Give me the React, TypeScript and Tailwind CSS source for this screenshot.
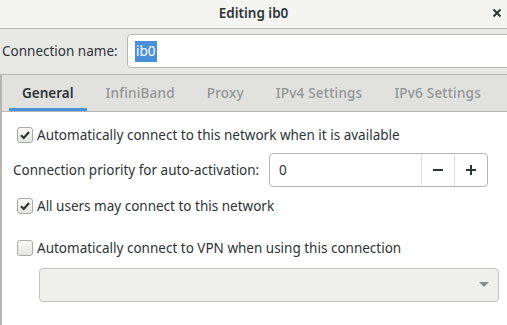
import React from 'react';

const font = { fontFamily: '"Noto Sans", "Open Sans", sans-serif' };

const Check: React.FC<{ on?: boolean }> = ({ on }) => (
  <span className="w-[16px] h-[16px] shrink-0 rounded-[3px] border border-[#a8aaa8] bg-gradient-to-b from-[#f8f8f7] to-[#e4e4e2] flex items-center justify-center">
    {on && (
      <svg width="12" height="12" viewBox="0 0 12 12">
        <path d="M2 6.2 L4.8 9 L10 3" fill="none" stroke="#2e3436" strokeWidth="2.2" />
      </svg>
    )}
  </span>
);

export default function App() {
  const tabs = ['General', 'InfiniBand', 'Proxy', 'IPv4 Settings', 'IPv6 Settings'];

  return (
    <div className="w-[507px] h-[325px] overflow-hidden bg-[#e8e8e7] text-[#2e3436] flex flex-col whitespace-nowrap" style={font}>
      {/* Header */}
      <div className="h-[29px] shrink-0 bg-[#f4f4f3] border-b border-[#b6b6b3] relative flex items-center justify-center">
        <span className="text-[13.5px] font-semibold leading-none">Editing ib0</span>
        <svg className="absolute right-[4px] top-[7px]" width="12" height="12" viewBox="0 0 12 12">
          <path d="M2.5 2.5 L9.5 9.5 M9.5 2.5 L2.5 9.5" stroke="#2e3436" strokeWidth="2" />
        </svg>
      </div>

      {/* Connection name */}
      <div className="flex items-center pt-[5px] shrink-0">
        <span className="pl-[2px] w-[127px] shrink-0 text-[13.5px]">Connection name:</span>
        <div className="w-[420px] h-[34px] shrink-0 bg-white border border-[#b6b6b3] rounded-l-[4px] flex items-center pl-[7px]">
          <span className="bg-[#4a90d9] text-white text-[13.5px] leading-[21px] px-[1px]">ib0</span>
        </div>
      </div>

      {/* Notebook */}
      <div className="mt-[6px] flex-1 flex flex-col border-t border-l-2 border-[#b6b6b3] bg-white">
        <div className="h-[37px] shrink-0 bg-[#e1e1e0] border-b border-[#b6b6b3] flex items-stretch pl-[7px]">
          {tabs.map((t, i) => (
            <div
              key={t}
              className={`px-[13px] mr-[6px] flex items-center text-[13.5px] ${i === 0 ? 'font-semibold text-[#2e3436] border-b-[3px] border-[#4a90d9] pt-[3px]' : 'font-medium text-[#929595] tracking-[0.2px]'}`}
            >
              {t}
            </div>
          ))}
        </div>

        <div className="flex flex-col text-[13.5px]">
          <label className="flex items-center gap-[4px] pl-[15px] mt-[13px] h-[20px]">
            <Check on />
            <span>Automatically connect to this network when it is available</span>
          </label>

          <div className="flex items-center pl-[11px] mt-[8px]">
            <span className="w-[256px] shrink-0">Connection priority for auto-activation:</span>
            <div className="w-[219px] h-[34px] border border-[#b6b6b3] rounded-[4px] flex items-stretch bg-white">
              <span className="flex-1 flex items-center pl-[9px]">0</span>
              <span className="w-[33px] border-l border-[#e2e2e0] flex items-center justify-center">
                <svg width="12" height="12" viewBox="0 0 12 12"><path d="M1 6 H11" stroke="#2e3436" strokeWidth="2" /></svg>
              </span>
              <span className="w-[33px] border-l border-[#e2e2e0] flex items-center justify-center">
                <svg width="12" height="12" viewBox="0 0 12 12"><path d="M1 6 H11 M6 1 V11" stroke="#2e3436" strokeWidth="2" /></svg>
              </span>
            </div>
          </div>

          <label className="flex items-center gap-[4px] pl-[15px] mt-[9px] h-[20px]">
            <Check on />
            <span>All users may connect to this network</span>
          </label>

          <label className="flex items-center gap-[4px] pl-[15px] mt-[22px] h-[20px]">
            <Check />
            <span>Automatically connect to VPN when using this connection</span>
          </label>

          <div className="ml-[37px] mt-[10px] w-[460px] h-[34px] rounded-[4px] border border-[#c4c4c2] bg-[#efefee] flex items-center justify-end pr-[9px]">
            <svg width="10" height="6" viewBox="0 0 10 6"><path d="M0 0 H10 L5 5 Z" fill="#8b8e8f" /></svg>
          </div>
        </div>
      </div>
    </div>
  );
}
